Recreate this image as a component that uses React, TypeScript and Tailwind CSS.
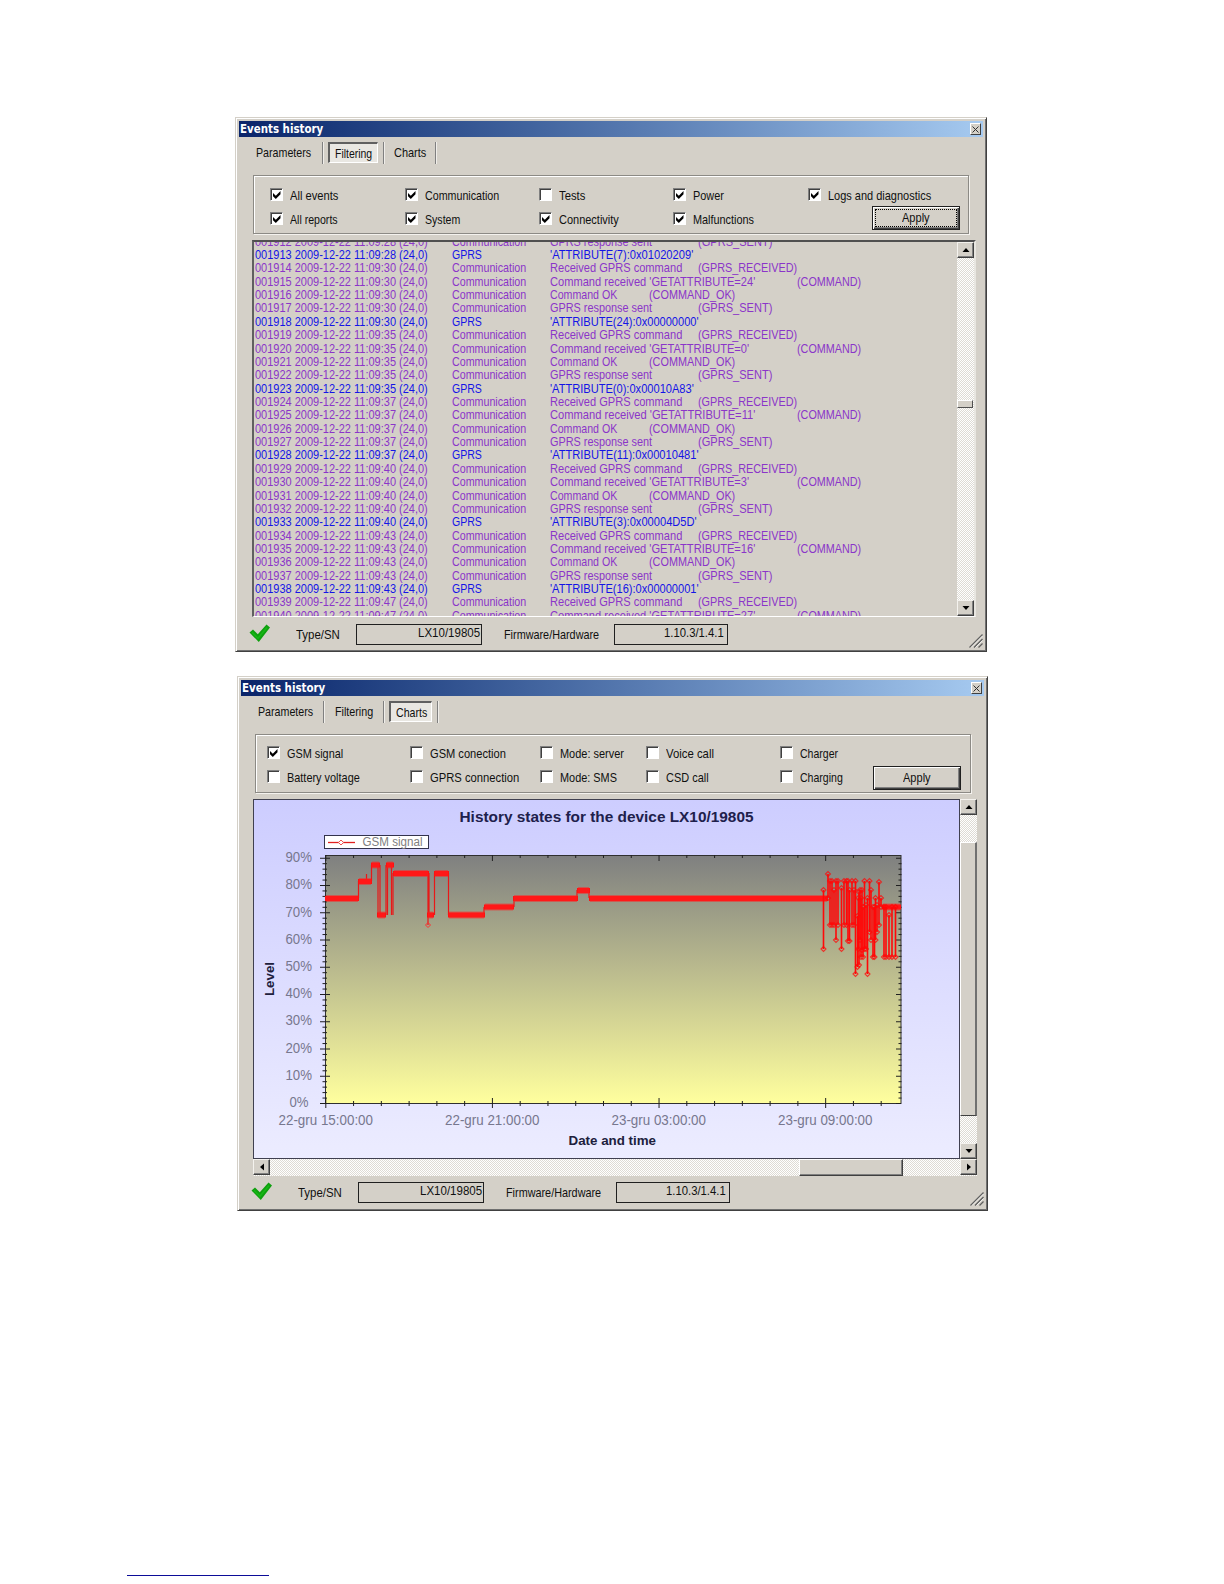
import { useLayoutEffect, useRef } from "react";

// Text squeezed horizontally to a fixed width, like the old bitmap dialog font.
function Fit({ w, className = "", children }: { w: number; className?: string; children: string }) {
  const ref = useRef<HTMLSpanElement>(null);
  useLayoutEffect(() => {
    const el = ref.current;
    if (el) el.style.transform = `scaleX(${w / el.offsetWidth})`;
  }, [w, children]);
  return (
    <span className="block shrink-0" style={{ width: w }}>
      <span ref={ref} className={`inline-block origin-left whitespace-pre ${className}`}>
        {children}
      </span>
    </span>
  );
}

type Check = { label: string; w: number; checked?: boolean };

function Checkbox({ label, w, checked }: Check) {
  return (
    <label className="flex items-start">
      <span className="flex h-[13px] w-[13px] shrink-0 items-center justify-center border border-t-[#808080] border-l-[#808080] border-r-white border-b-white bg-white shadow-[inset_1px_1px_0_#404040]">
        {checked && (
          <svg width="9" height="9" viewBox="0 0 9 9">
            <path d="M1 3v3.200L3.800 9l4.700-4.700V1L3.800 5.700z" fill="#000" />
          </svg>
        )}
      </span>
      <span className="ml-[7px] leading-[15px]">
        <Fit w={w}>{label}</Fit>
      </span>
    </label>
  );
}

function ApplyButton({ focused }: { focused?: boolean }) {
  return (
    <button className="flex h-[24px] w-[88px] border border-[#202020] bg-[#d4d0c8] p-[2px] shadow-[inset_1px_1px_0_#fff,inset_-1px_-1px_0_#404040,inset_-2px_-2px_0_#808080]">
      <span
        className={`flex h-full w-full items-center justify-center leading-[15px] ${
          focused ? "border border-dotted border-black" : ""
        }`}
      >
        <Fit w={28}>Apply</Fit>
      </span>
    </button>
  );
}

function ArrowButton({ dir }: { dir: "up" | "down" | "left" | "right" }) {
  const paths = {
    up: "M0.500 6h7L4 2z",
    down: "M0.500 2h7L4 6z",
    left: "M6 0.500v7L2 4z",
    right: "M2 0.500v7L6 4z",
  };
  return (
    <span className="flex h-[16px] w-[17px] shrink-0 items-center justify-center border border-t-[#f4f2ee] border-l-[#f4f2ee] border-r-[#404040] border-b-[#404040] bg-[#d4d0c8] shadow-[inset_-1px_-1px_0_#808080]">
      <svg width="8" height="8" viewBox="0 0 8 8">
        <path d={paths[dir]} fill="#000" />
      </svg>
    </span>
  );
}

function Separator() {
  return <span className="h-[22px] w-[2px] shrink-0 border-l border-[#808080] bg-[#f0eeea]" />;
}

function PressedTab({ className, children }: { className: string; children: React.ReactNode }) {
  return (
    <span
      className={`flex h-[21px] items-center border-t-2 border-l-2 border-r border-b border-t-[#606060] border-l-[#606060] border-r-white border-b-white bg-[#e9e7e2] ${className}`}
    >
      {children}
    </span>
  );
}

function StatusBar() {
  return (
    <div className="flex h-[36px] items-start pt-[7px] pl-[10px]">
      <svg width="22" height="19" viewBox="0 0 22 19">
        <path d="M0.500 8.500L4 5.500l4.800 4.800L17.500 0.500 21 3.500 9.800 18z" fill="#0fa00f" />
        <path d="M3 8.300l5.900 6L18 3.500" fill="none" stroke="#16b816" strokeWidth="1.500" />
      </svg>
      <span className="mt-[3px] ml-[25px] leading-[15px]">
        <Fit w={44}>Type/SN</Fit>
      </span>
      <span className="ml-[16px] flex h-[21px] w-[126px] justify-end border border-[#202020] pr-[1px] leading-[15px]">
        <Fit w={62}>LX10/19805</Fit>
      </span>
      <span className="mt-[3px] ml-[21.500px] leading-[15px]">
        <Fit w={95}>Firmware/Hardware</Fit>
      </span>
      <span className="ml-[15.500px] flex h-[21px] w-[114px] justify-end border border-[#202020] pr-[3px] leading-[15px]">
        <Fit w={60}>1.10.3/1.4.1</Fit>
      </span>
      <svg width="14" height="14" viewBox="0 0 14 14" className="mt-[10px] ml-auto">
        <path d="M0.500 13.500l13-13M5 13.500L13.500 5M9.500 13.500l4-4" stroke="#606060" strokeWidth="1.300" />
        <path d="M2 13.500L13.500 2M6.500 13.500l7-7" stroke="#fff" strokeWidth="0.700" />
      </svg>
    </div>
  );
}

function DialogWindow({ className, children }: { className: string; children: React.ReactNode }) {
  return (
    <section
      className={`flex flex-col border border-t-[#d4d0c8] border-l-[#d4d0c8] border-r-[#404040] border-b-[#404040] bg-[#d4d0c8] p-[3px] shadow-[inset_1px_1px_0_#fff,inset_-1px_-1px_0_#707070] ${className}`}
    >
      <header className="flex h-[16px] shrink-0 items-center justify-between bg-linear-to-r from-[#0a246a] to-[#a6caf0] pr-[2px] pl-[1px]">
        <Fit w={83} className="font-['DejaVu_Sans'] text-[12px] leading-[16px] font-bold text-white">
          Events history
        </Fit>
        <span className="flex h-[12px] w-[11px] items-center justify-center border border-t-white border-l-white border-r-[#404040] border-b-[#404040] bg-[#d4d0c8]">
          <svg width="7" height="7" viewBox="0 0 7 7">
            <path d="M0.500 0.500l6 6M6.500 0.500l-6 6" stroke="#303030" strokeWidth="1" />
          </svg>
        </span>
      </header>
      {children}
    </section>
  );
}

const group = "ml-[14px] grid w-[716px] shrink-0 border border-[#8c8a85] shadow-[inset_1px_1px_0_#fff,1px_1px_0_#f4f2ee]";
const track = "bg-[repeating-conic-gradient(#fff_0_25%,#dedbd4_0_50%)] bg-[length:2px_2px]";

const filters: Check[] = [
  { label: "All events", w: 48, checked: true },
  { label: "Communication", w: 74, checked: true },
  { label: "Tests", w: 26 },
  { label: "Power", w: 31, checked: true },
  { label: "Logs and diagnostics", w: 103, checked: true },
  { label: "All reports", w: 48, checked: true },
  { label: "System", w: 35, checked: true },
  { label: "Connectivity", w: 60, checked: true },
  { label: "Malfunctions", w: 61, checked: true },
];

const chartOptions: Check[] = [
  { label: "GSM signal", w: 56, checked: true },
  { label: "GSM conection", w: 76 },
  { label: "Mode: server", w: 64 },
  { label: "Voice call", w: 48 },
  { label: "Charger", w: 38 },
  { label: "Battery voltage", w: 73 },
  { label: "GPRS connection", w: 89 },
  { label: "Mode: SMS", w: 57 },
  { label: "CSD call", w: 43 },
  { label: "Charging", w: 43 },
];

// Each polling cycle: response, attribute value, received, command, ok.
const cycles = [
  { time: "11:09:28", attr: "(7):0x01020209", attrW: 143 },
  { time: "11:09:30", attr: "(24):0x00000000", attrW: 149, cmd: "24" },
  { time: "11:09:35", attr: "(0):0x00010A83", attrW: 144, cmd: "0" },
  { time: "11:09:37", attr: "(11):0x00010481", attrW: 149, cmd: "11" },
  { time: "11:09:40", attr: "(3):0x00004D5D", attrW: 147, cmd: "3" },
  { time: "11:09:43", attr: "(16):0x00000001", attrW: 149, cmd: "16" },
  { time: "11:09:47", cmd: "27" },
];

type Row = { time: string; gprs?: boolean; text: string; w: number; gap?: number; code?: string; codeW?: number };

const rows: Row[] = cycles
  .flatMap(({ time, attr, attrW, cmd }): Row[] => [
    { time, text: "Received GPRS command", w: 132, gap: 16, code: "(GPRS_RECEIVED)", codeW: 99 },
    {
      time,
      text: `Command received 'GETATTRIBUTE=${cmd}'`,
      w: cmd && cmd.length === 1 ? 199 : 205,
      gap: cmd && cmd.length === 1 ? 48 : 42,
      code: "(COMMAND)",
      codeW: 64,
    },
    { time, text: "Command OK", w: 67, gap: 32, code: "(COMMAND_OK)", codeW: 86 },
    { time, text: "GPRS response sent", w: 102, gap: 46, code: "(GPRS_SENT)", codeW: 74 },
    { time, gprs: true, text: `'ATTRIBUTE${attr}'`, w: attrW ?? 0 },
  ])
  .slice(3, 32);

function EventList() {
  return (
    <div className="mt-[6px] ml-[13px] flex h-[377px] w-[724px] shrink-0 border-t-2 border-l-2 border-r-2 border-b border-t-[#505050] border-l-[#606060] border-r-[#e8e6e0] border-b-white">
      <div className="h-full flex-1 overflow-hidden">
        <div className="-mt-[7.500px] pl-[1px]">
          {rows.map((row, i) => (
            <div
              key={i}
              className={`flex h-[13.370px] items-center leading-[13px] ${row.gprs ? "text-[#1414e6]" : "text-[#8b35c9]"}`}
            >
              <Fit w={172.500}>{`00${1912 + i} 2009-12-22 ${row.time} (24,0)`}</Fit>
              <span className="ml-[24.500px] w-[98px]">
                <Fit w={row.gprs ? 30 : 74}>{row.gprs ? "GPRS" : "Communication"}</Fit>
              </span>
              <Fit w={row.w}>{row.text}</Fit>
              {row.code && (
                <span style={{ marginLeft: row.gap }}>
                  <Fit w={row.codeW ?? 0}>{row.code}</Fit>
                </span>
              )}
            </div>
          ))}
        </div>
      </div>
      <div className={`flex w-[17px] flex-col ${track}`}>
        <ArrowButton dir="up" />
        <span className="mt-[142px] h-[8px] w-[16px] border border-t-white border-l-white border-r-[#505050] border-b-[#505050] bg-[#d4d0c8]" />
        <span className="mt-auto flex">
          <ArrowButton dir="down" />
        </span>
      </div>
    </div>
  );
}

// Flat runs of the signal: x start, x end, y.
const runs = [
  [325, 359, 898.500],
  [358, 372, 881.500],
  [371, 380, 865],
  [377, 386, 915],
  [386, 394, 865],
  [393, 429, 873.500],
  [427, 434, 915],
  [434, 449, 873.500],
  [448, 485, 915],
  [484, 514, 907],
  [513, 578, 898.500],
  [577, 590, 890.500],
  [589, 828, 898.500],
  [882, 901, 907],
];

// Swings between levels: x, y top, y bottom.
const swings = [
  [823.500, 890, 949],
  [828, 874, 898],
  [830, 881, 925],
  [832, 881, 925],
  [834, 890, 925],
  [836, 881, 940],
  [838, 881, 925],
  [841.500, 888, 949],
  [844, 881, 925],
  [846.500, 881, 925],
  [848, 881, 941],
  [849.500, 890, 941],
  [852, 881, 925],
  [854, 890, 925],
  [855.500, 881, 974],
  [857.500, 916, 967],
  [858.300, 898, 949],
  [859, 892, 965],
  [860, 890, 940],
  [861, 898, 957],
  [862, 890, 950],
  [863, 907, 957],
  [864.500, 881, 949],
  [866, 905, 949],
  [867.500, 898, 974],
  [869.500, 881, 932],
  [871, 890, 940],
  [873, 907, 957],
  [874.500, 907, 957],
  [875.500, 898, 940],
  [877, 905, 932],
  [879, 882, 925],
  [881, 898, 907],
  [884, 907, 957],
  [886, 907, 957],
  [889, 915, 957],
  [892, 907, 957],
  [895.500, 907, 957],
];

const drops = "M358.500 898V881M366.500 881v-7M371.500 881V865M378 865V915M380 865V915M386 915V865M387.500 915V865M391.500 865V915M393 915V873M428 873V925M429 915V873M434.500 915V873M448.500 873V915M484 915V907M514 907V898M577 898V890M589 890V898";

const diamond = (x: number, y: number) => `M${x - 2.500} ${y}l2.500-2.500 2.500 2.500-2.500 2.500z`;

const xLabels = ["22-gru 15:00:00", "22-gru 21:00:00", "23-gru 03:00:00", "23-gru 09:00:00"];

function SignalChart() {
  const yTicks = Array.from({ length: 46 }, (_, i) => i);
  const xTicks = Array.from({ length: 21 }, (_, i) => i);
  return (
    <svg width="705" height="358" viewBox="254 800 705 358" className="block font-['Liberation_Sans']">
      <defs>
        <linearGradient id="panel" x1="0" y1="0" x2="0" y2="1">
          <stop offset="0" stopColor="#cdcdff" />
          <stop offset="1" stopColor="#ececff" />
        </linearGradient>
        <linearGradient id="plot" x1="0" y1="0" x2="0" y2="1">
          <stop offset="0" stopColor="#7f8080" />
          <stop offset="1" stopColor="#ffff9e" />
        </linearGradient>
      </defs>
      <rect x="254" y="800" width="705" height="358" fill="url(#panel)" />
      <text x="459.500" y="821.500" fontSize="15.500" fontWeight="bold" fill="#20204c" textLength="294" lengthAdjust="spacingAndGlyphs">
        History states for the device LX10/19805
      </text>

      <rect x="324.500" y="835.500" width="104" height="13" fill="#fff" stroke="#33334d" />
      <path d="M328 842.500h27" stroke="#e02020" strokeWidth="1.300" />
      <path d={diamond(341, 842.500)} fill="#fff" stroke="#f05050" />
      <text x="362.500" y="846" fontSize="12" fill="#808080" textLength="60" lengthAdjust="spacingAndGlyphs">
        GSM signal
      </text>

      <rect x="325.500" y="855.500" width="575.500" height="248" fill="url(#plot)" stroke="#303030" />
      {yTicks.map((i) => {
        const y = 1103.500 - i * 5.450;
        const major = i % 5 === 0;
        return (
          <g key={i} stroke="#202020">
            <path d={major ? `M320 ${y}h10` : `M322.500 ${y}h4.500`} />
            <path d={major ? `M896 ${y}h5` : `M898.500 ${y}h3`} />
          </g>
        );
      })}
      {xTicks.map((i) => {
        const x = 325.800 + i * 27.770;
        const major = i % 6 === 0;
        return (
          <g key={i} stroke="#202020">
            <path d={major ? `M${x} 1098v10` : `M${x} 1101v5`} />
            <path d={major ? `M${x} 855v6` : `M${x} 855v3`} />
          </g>
        );
      })}
      {Array.from({ length: 10 }, (_, i) => (
        <text
          key={i}
          x={i ? 285.500 : 289.500}
          y={1107 - i * 27.200}
          fontSize="14"
          fill="#77778e"
          textLength={i ? 26.500 : 19}
          lengthAdjust="spacingAndGlyphs"
        >
          {`${i * 10}%`}
        </text>
      ))}
      {xLabels.map((label, i) => (
        <text key={label} x={278.500 + i * 166.500} y="1124.500" fontSize="14" fill="#77778e" textLength="94.500" lengthAdjust="spacingAndGlyphs">
          {label}
        </text>
      ))}
      <text x="568.500" y="1144.500" fontSize="13" fontWeight="bold" fill="#20203c" textLength="87.500" lengthAdjust="spacingAndGlyphs">
        Date and time
      </text>
      <text transform="translate(274 996) rotate(-90)" fontSize="13" fontWeight="bold" fill="#20203c" textLength="34" lengthAdjust="spacingAndGlyphs">
        Level
      </text>

      <path d={drops} stroke="#e81818" strokeWidth="1.200" fill="none" />
      {runs.map(([x1, x2, y]) => (
        <g key={`${x1}-${y}`}>
          <path d={`M${x1} ${y}H${x2}`} stroke="#ff1010" strokeWidth="5" />
          <path d={`M${x1 + 1} ${y}H${x2 - 1}`} stroke="#ff2020" strokeWidth="7" strokeOpacity="0.500" />
        </g>
      ))}
      <path d={diamond(428, 925)} stroke="#ff3030" fill="none" />
      {swings.map(([x, top, bottom]) => (
        <g key={x} stroke="#ff0808" fill="none">
          <path d={`M${x} ${top}V${bottom}`} strokeWidth="1.600" />
          <path d={diamond(x, top) + diamond(x, bottom)} strokeOpacity="0.750" strokeWidth="1.100" />
        </g>
      ))}
    </svg>
  );
}

export default function App() {
  return (
    <main className="flex h-[1584px] w-[1224px] flex-col bg-white pt-[117px] font-['Liberation_Sans',Arial,sans-serif] text-[13px] text-[#101010]">
      <DialogWindow className="ml-[235px] h-[535px] w-[752px]">
        <nav className="mt-[5px] flex h-[22px] shrink-0 items-center pb-[1px] pl-[17px] leading-[15px]">
          <Fit w={55}>Parameters</Fit>
          <span className="w-[11px]" />
          <Separator />
          <PressedTab className="mr-[5px] ml-[4px] w-[50px] pl-[5px]">
            <Fit w={37}>Filtering</Fit>
          </PressedTab>
          <Separator />
          <span className="w-[9px]" />
          <Fit w={32}>Charts</Fit>
          <span className="w-[9px]" />
          <Separator />
        </nav>
        <div className={`mt-[11px] h-[59px] auto-rows-[23.500px] grid-cols-[134.500px_134px_134.500px_134.500px_auto] pt-[12px] pl-[16px] ${group}`}>
          {filters.map((f) => (
            <Checkbox key={f.label} {...f} />
          ))}
          <div className="-mt-[6px] ml-[64.500px]">
            <ApplyButton focused />
          </div>
        </div>
        <EventList />
        <StatusBar />
      </DialogWindow>

      <DialogWindow className="mt-[24px] ml-[237px] h-[535px] w-[751px]">
        <nav className="mt-[5px] flex h-[22px] shrink-0 items-center pb-[1px] pl-[17px] leading-[15px]">
          <Fit w={55}>Parameters</Fit>
          <span className="w-[10px]" />
          <Separator />
          <span className="w-[10px]" />
          <Fit w={38}>Filtering</Fit>
          <span className="w-[10px]" />
          <Separator />
          <PressedTab className="mr-[5px] ml-[4px] w-[43px] pl-[5px]">
            <Fit w={31}>Charts</Fit>
          </PressedTab>
          <Separator />
        </nav>
        <div className={`mt-[11px] h-[59px] auto-rows-[23.500px] grid-cols-[143px_130px_106px_134px_93px_auto] pt-[11px] pl-[11px] ${group}`}>
          {chartOptions.slice(0, 5).map((o) => (
            <Checkbox key={o.label} {...o} />
          ))}
          <span />
          {chartOptions.slice(5).map((o) => (
            <Checkbox key={o.label} {...o} />
          ))}
          <div className="-mt-[4px]">
            <ApplyButton />
          </div>
        </div>
        <div className="mt-[6px] ml-[12px] flex w-[724px] shrink-0">
          <div className="border border-[#404050]">
            <SignalChart />
          </div>
          <div className={`flex w-[17px] flex-col ${track}`}>
            <ArrowButton dir="up" />
            <span className="mt-[27px] h-[274px] border border-t-white border-l-white border-r-2 border-r-[#707070] border-b-[#404040] bg-[#d4d0c8]" />
            <span className="mt-auto flex">
              <ArrowButton dir="down" />
            </span>
          </div>
        </div>
        <div className={`ml-[12px] flex h-[17px] w-[724px] shrink-0 items-stretch ${track}`}>
          <ArrowButton dir="left" />
          <span className="ml-[529px] w-[104px] border border-t-white border-l-white border-r-[#404040] border-b-[#404040] bg-[#d4d0c8] shadow-[inset_-1px_-1px_0_#808080]" />
          <span className="ml-auto flex">
            <ArrowButton dir="right" />
          </span>
        </div>
        <div className="-mt-[1px]">
          <StatusBar />
        </div>
      </DialogWindow>

      <div className="mt-auto mb-[8px] ml-[127px] h-px w-[142px] bg-[#0c0c98]" />
    </main>
  );
}
